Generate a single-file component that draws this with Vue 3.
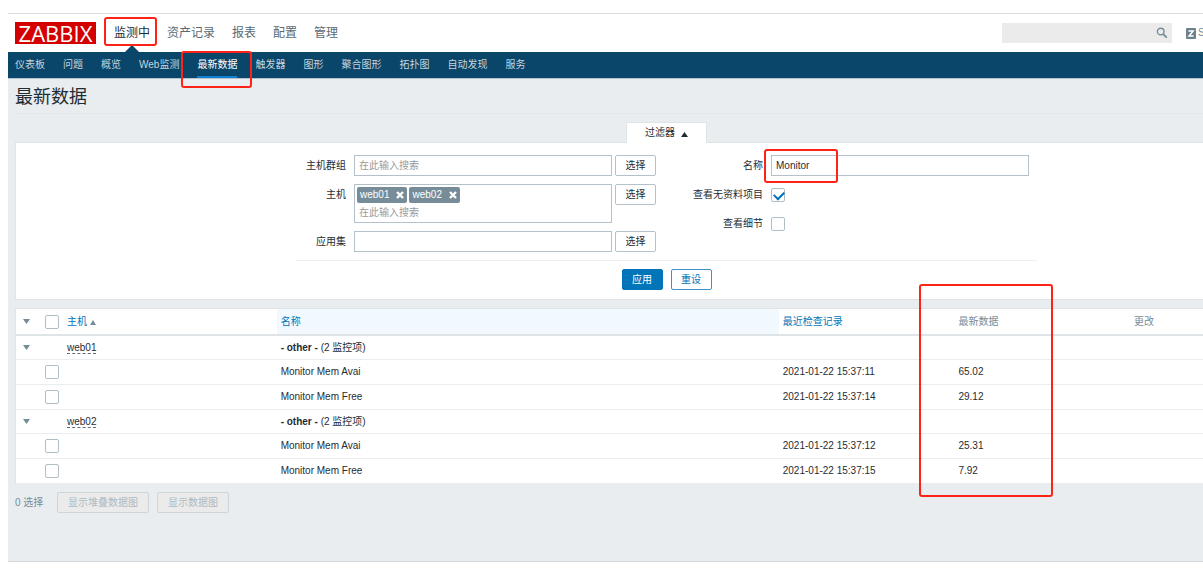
<script setup>
import { ref } from 'vue'

const mainMenu = ['监测中', '资产记录', '报表', '配置', '管理']
const subMenu = ['仪表板', '问题', '概览', 'Web监测', '最新数据', '触发器', '图形', '聚合图形', '拓扑图', '自动发现', '服务']
const activeMain = '监测中'
const activeSub = '最新数据'

const hosts = ref(['web01', 'web02'])
const itemName = ref('Monitor')
const withoutData = ref(true)
const showDetails = ref(false)

const groups = [
  {
    host: 'web01',
    items: [
      { name: 'Monitor Mem Avai', time: '2021-01-22 15:37:11', value: '65.02' },
      { name: 'Monitor Mem Free', time: '2021-01-22 15:37:14', value: '29.12' }
    ]
  },
  {
    host: 'web02',
    items: [
      { name: 'Monitor Mem Avai', time: '2021-01-22 15:37:12', value: '25.31' },
      { name: 'Monitor Mem Free', time: '2021-01-22 15:37:15', value: '7.92' }
    ]
  }
]
</script>

<template>
  <div class="page">
    <header class="top">
      <a class="logo" href="#">ZABBIX</a>
      <nav class="main-menu">
        <a v-for="m in mainMenu" :key="m" href="#" :class="{ active: m === activeMain }">
          {{ m }}<span v-if="m === activeMain" class="mark mark-main"></span>
        </a>
      </nav>
      <form class="search" @submit.prevent>
        <input type="text" aria-label="search" />
        <button type="submit" aria-label="search">
          <svg width="12" height="12" viewBox="0 0 12 12">
            <circle cx="4.7" cy="4.5" r="3.3" fill="none" stroke="#768d99" stroke-width="1.4" />
            <path d="M7 7L10.8 10.6" stroke="#768d99" stroke-width="1.8" />
          </svg>
        </button>
      </form>
      <a class="share" href="#">
        <svg width="10" height="11" viewBox="0 0 10 11">
          <rect width="10" height="11" rx="1" fill="#6b818d" />
          <path d="M2.4 2.9H7.2L3 8.1H7.6" fill="none" stroke="#fff" stroke-width="1.5" />
        </svg>
        <span>S</span>
      </a>
    </header>

    <nav class="sub-menu">
      <a v-for="m in subMenu" :key="m" href="#" :class="{ active: m === activeSub }">
        {{ m }}<span v-if="m === activeSub" class="mark mark-sub"></span>
      </a>
    </nav>

    <main>
      <h1>最新数据</h1>

      <div class="tab-row">
        <button type="button" class="tab">
          过滤器
          <svg width="7" height="5" viewBox="0 0 7 5"><path d="M3.5 0L7 5H0Z" fill="#1f2c33" /></svg>
        </button>
      </div>

      <form class="filter" @submit.prevent>
        <div class="columns">
          <div class="column left">
            <div class="row">
              <label for="groups">主机群组</label>
              <div class="field"><input id="groups" type="text" placeholder="在此输入搜索" /></div>
              <button type="button" class="btn">选择</button>
            </div>
            <div class="row">
              <label for="hosts">主机</label>
              <div class="field multi">
                <div class="chips">
                  <span v-for="h in hosts" :key="h" class="chip">
                    {{ h }}
                    <button type="button" :aria-label="'remove ' + h">
                      <svg width="8" height="8" viewBox="0 0 8 8">
                        <path d="M1 1L7 7M7 1L1 7" stroke="#fff" stroke-width="2.3" />
                      </svg>
                    </button>
                  </span>
                </div>
                <input id="hosts" type="text" placeholder="在此输入搜索" />
              </div>
              <button type="button" class="btn">选择</button>
            </div>
            <div class="row">
              <label for="apps">应用集</label>
              <div class="field"><input id="apps" type="text" /></div>
              <button type="button" class="btn">选择</button>
            </div>
          </div>
          <div class="column right">
            <div class="row">
              <label for="name">名称</label>
              <div class="field">
                <input id="name" v-model="itemName" type="text" />
                <span class="mark mark-name"></span>
              </div>
            </div>
            <div class="row middle">
              <label for="nodata">查看无资料项目</label>
              <input id="nodata" v-model="withoutData" type="checkbox" class="check" />
            </div>
            <div class="row middle">
              <label for="details">查看细节</label>
              <input id="details" v-model="showDetails" type="checkbox" class="check" />
            </div>
          </div>
        </div>
        <div class="actions">
          <button type="submit" class="btn primary">应用</button>
          <button type="reset" class="btn secondary">重设</button>
        </div>
      </form>

      <table>
        <colgroup>
          <col class="c-arrow" /><col class="c-check" /><col class="c-host" /><col class="c-name" />
          <col class="c-data" /><col class="c-data" /><col />
        </colgroup>
        <thead>
          <tr>
            <th class="arrow">
              <svg width="7" height="5" viewBox="0 0 7 5"><path d="M0 0H7L3.5 5Z" fill="#768d99" /></svg>
            </th>
            <th class="tick"><input type="checkbox" class="check" aria-label="all" /></th>
            <th>
              <a href="#">主机</a>
              <svg class="sort" width="6" height="5" viewBox="0 0 6 5"><path d="M3 0L6 5H0Z" fill="#768d99" /></svg>
            </th>
            <th class="hover"><a href="#">名称</a></th>
            <th><a href="#">最近检查记录</a></th>
            <th class="latest">最新数据<span class="mark mark-latest"></span></th>
            <th>更改</th>
          </tr>
        </thead>
        <tbody v-for="g in groups" :key="g.host">
          <tr class="group">
            <td class="arrow">
              <svg width="7" height="5" viewBox="0 0 7 5"><path d="M0 0H7L3.5 5Z" fill="#768d99" /></svg>
            </td>
            <td></td>
            <td><a class="host" href="#">{{ g.host }}</a></td>
            <td colspan="4"><b>- other -</b> ({{ g.items.length }} 监控项)</td>
          </tr>
          <tr v-for="i in g.items" :key="i.name">
            <td></td>
            <td class="tick"><input type="checkbox" class="check" :aria-label="i.name" /></td>
            <td></td>
            <td>{{ i.name }}</td>
            <td>{{ i.time }}</td>
            <td>{{ i.value }}</td>
            <td></td>
          </tr>
        </tbody>
      </table>

      <div class="bulk">
        <span>0 选择</span>
        <button type="button" class="btn" disabled>显示堆叠数据图</button>
        <button type="button" class="btn" disabled>显示数据图</button>
      </div>
    </main>
  </div>
</template>

<style>
body {
  background: #fff;
}
</style>

<style scoped>
.page,
.page * {
  box-sizing: border-box;
}
.page {
  display: flex;
  flex-direction: column;
  min-height: 100vh;
  padding: 13px 0 8px 8px;
  overflow: hidden;
  font-family: 'Liberation Sans', Arial, 'Noto Sans CJK SC', sans-serif;
  font-size: 10px;
  line-height: 14px;
  color: #1f2c33;
}
a {
  color: inherit;
  text-decoration: none;
}
button,
input {
  font: inherit;
  color: inherit;
  margin: 0;
}
svg {
  display: block;
  flex: none;
}

.top {
  display: flex;
  align-items: center;
  height: 39px;
  padding-left: 7px;
  border-top: 1px solid #dcdfe1;
}
.logo {
  width: 81px;
  background: #d40000;
  color: #fff;
  font-family: 'Open Sans', 'Noto Sans', sans-serif;
  font-size: 22px;
  line-height: 22px;
  text-align: center;
}
.main-menu {
  display: flex;
  gap: 17px;
  margin-left: 18px;
  font-size: 12px;
  line-height: 38px;
  color: #5a6a74;
}
.main-menu a {
  position: relative;
  white-space: nowrap;
}
.main-menu .active {
  color: #1f2c33;
}
.main-menu .active::after {
  content: '';
  position: absolute;
  left: 50%;
  bottom: 0;
  margin-left: -7px;
  border: 7px solid transparent;
  border-top: 0;
  border-bottom-color: #0a466a;
}
.search {
  display: flex;
  align-items: center;
  width: 170px;
  height: 20px;
  margin-left: auto;
  background: #ebebeb;
}
.search input {
  flex: 1;
  min-width: 0;
  border: 0;
  background: none;
}
.search button {
  padding: 0 4px;
  border: 0;
  background: none;
}
.share {
  display: flex;
  align-items: center;
  gap: 2px;
  width: 17px;
  margin-left: 14px;
  overflow: hidden;
  color: #768d99;
}

.sub-menu {
  display: flex;
  gap: 18px;
  height: 27px;
  padding-left: 7px;
  background: #0a466a;
  border-bottom: 1px solid #b4c5d0;
  color: #c6d5de;
  line-height: 26px;
}
.sub-menu a {
  position: relative;
  white-space: nowrap;
}
.sub-menu .active {
  color: #fff;
  box-shadow: inset 0 -2px #0f80d0;
}

main {
  flex: 1;
  padding: 0 0 20px 7px;
  background: #e9edf0;
  border-bottom: 1px solid #d3d7da;
}
h1 {
  margin: 0;
  padding: 4px 0 2px;
  font-size: 18px;
  line-height: 28px;
  font-weight: 400;
  border-bottom: 1px solid #e3e8eb;
}
.tab-row {
  display: flex;
  justify-content: center;
  padding: 8px 0 0 115px;
}
.tab {
  position: relative;
  display: flex;
  align-items: center;
  justify-content: center;
  gap: 6px;
  width: 81px;
  height: 21px;
  margin-bottom: -1px;
  padding: 0;
  border: 1px solid #dfe4e7;
  border-bottom: 0;
  border-radius: 2px 2px 0 0;
  background: #fff;
}
.tab svg {
  margin-top: 2px;
}
.filter {
  padding: 12px 0 9px 114px;
  border: 1px solid #dfe4e7;
  border-right: 0;
  background: #fff;
}
.columns {
  display: flex;
  justify-content: space-between;
  width: 741px;
  margin: 0 auto;
  padding: 0 8px 8px 0;
  border-bottom: 1px solid #edf0f2;
}
.column {
  display: flex;
  flex-direction: column;
  gap: 8px;
}
.row {
  display: flex;
  align-items: flex-start;
}
.row label {
  width: 96px;
  margin-right: 8px;
  line-height: 21px;
  text-align: right;
  white-space: nowrap;
}
.left label {
  width: 50px;
}
.row.middle {
  align-items: center;
}
.field {
  position: relative;
  display: flex;
  width: 258px;
  min-height: 21px;
  border: 1px solid #b4c1c8;
  background: #fff;
}
.field input {
  flex: 1;
  min-width: 0;
  padding: 0 4px;
  border: 0;
  background: none;
}
.field input::placeholder {
  color: #9a9a9a;
  opacity: 1;
}
.multi {
  flex-direction: column;
  height: 39px;
}
.chips {
  display: flex;
  gap: 2px;
  padding: 2px 2px 0;
}
.chip {
  display: flex;
  align-items: center;
  gap: 7px;
  height: 16px;
  padding: 0 3px;
  border-radius: 2px;
  background: #768d99;
  color: #fff;
}
.chip button {
  padding: 0;
  border: 0;
  background: none;
}
.btn {
  height: 21px;
  padding: 0 10px;
  border: 1px solid #b4c1c8;
  border-radius: 2px;
  background: #fff;
  line-height: 19px;
  white-space: nowrap;
}
.row .btn {
  width: 41px;
  margin-left: 3px;
  padding: 0;
}
.actions {
  display: flex;
  justify-content: center;
  gap: 8px;
  padding-top: 8px;
}
.actions .btn {
  width: 41px;
  padding: 0;
}
.primary {
  background: #0275b8;
  border-color: #0275b8;
  color: #fff;
}
.secondary {
  border-color: #3c93c8;
  color: #0275b8;
}
.check {
  display: block;
  appearance: none;
  width: 14px;
  height: 14px;
  border: 1px solid #b0bec5;
  border-radius: 2px;
  background: #fff;
}
.check:checked::after {
  content: '';
  display: block;
  width: 8px;
  height: 5px;
  margin: 2px 0 0 2px;
  border: solid #0275b8;
  border-width: 0 0 2px 2px;
  transform: rotate(-45deg);
}

table {
  width: 100%;
  margin-top: 8px;
  table-layout: fixed;
  border-collapse: separate;
  border-spacing: 0;
  border: solid #dfe4e7;
  border-width: 1px 0 0 1px;
  background: #fff;
}
.c-arrow {
  width: 22px;
}
.c-check {
  width: 25px;
}
.c-host {
  width: 18%;
}
.c-name {
  width: 42.3%;
}
.c-data {
  width: 14.8%;
}
th,
td {
  height: 25px;
  padding: 0 4px;
  border-bottom: 1px solid #ebeef0;
  text-align: left;
  font-weight: 400;
  white-space: nowrap;
}
.group td {
  height: 24px;
}
th {
  height: 27px;
  border-bottom: 2px solid #dfe4e7;
  color: #768d99;
}
th a {
  color: #0275b8;
}
th.hover {
  background: #f1f9ff;
}
th.arrow,
td.arrow {
  padding: 0 0 0 7px;
}
th.tick,
td.tick {
  padding: 0 0 0 7px;
}
.sort {
  display: inline-block;
  margin-left: 3px;
}
.host {
  border-bottom: 1px dashed #5f6b73;
}
.latest {
  position: relative;
}

.bulk {
  display: flex;
  align-items: center;
  gap: 8px;
  padding-top: 8px;
  color: #768d99;
}
.bulk span {
  width: 34px;
}
.bulk .btn {
  background: #ebebeb;
  border-color: #ccd5da;
  color: #acbbc2;
}

/* Red highlight frames */
.mark {
  position: absolute;
  z-index: 2;
  border: 2px solid #ff2317;
  border-radius: 3px;
  pointer-events: none;
}
.mark-main {
  inset: 3px -7px 6px -10px;
}
.mark-sub {
  inset: -1px -15px -10px -16px;
}
.mark-name {
  left: -8px;
  top: -7px;
  width: 74px;
  height: 34px;
}
.mark-latest {
  left: -35px;
  top: -25px;
  width: 134px;
  height: 213px;
}
</style>
